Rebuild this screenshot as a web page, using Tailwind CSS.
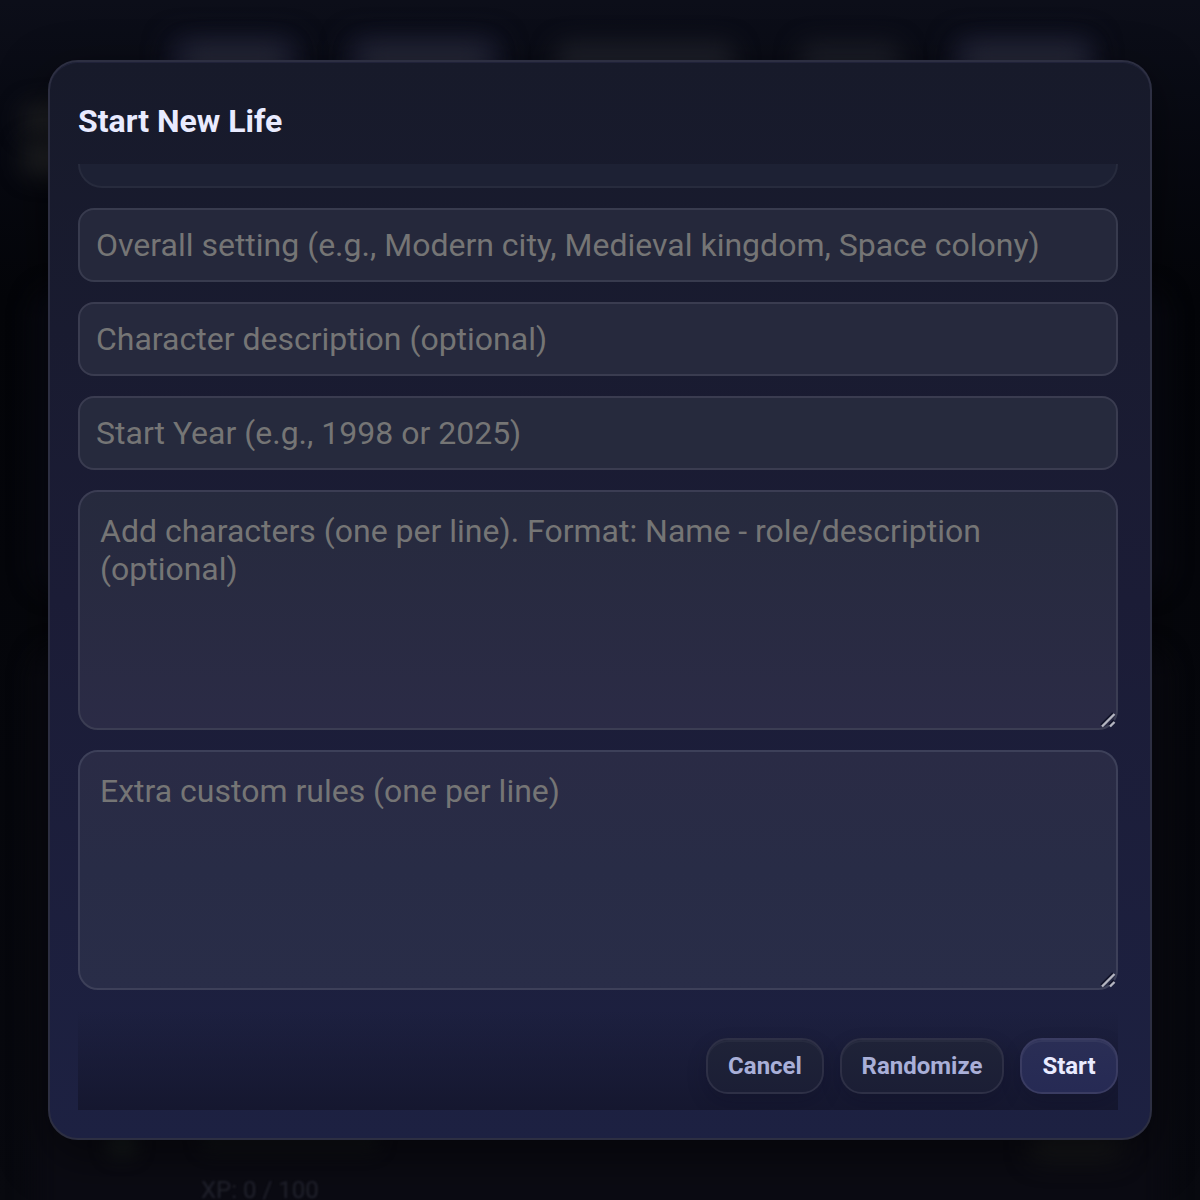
<!DOCTYPE html>
<html lang="en">
  <head>
    <meta charset="UTF-8" />
    <meta name="viewport" content="width=device-width, initial-scale=1.0" />
    <title>Start New Life</title>
    <script src="https://cdn.jsdelivr.net/npm/@tailwindcss/browser@4"></script>
  </head>
  <body class="relative h-[1200px] w-[1200px] overflow-hidden bg-[#040509] font-['Roboto',sans-serif]">
    <!-- Page behind the dialog -->
    <div class="absolute inset-0 overflow-hidden" aria-hidden="true">
      <div class="absolute inset-0 bg-linear-to-b from-[#0c0e19] via-[#040509] via-25% to-[#08090f]"></div>
      <div class="absolute top-[290px] left-[34px] h-[300px] w-[1132px] rounded-3xl bg-[#090a14] blur-md"></div>
      <div class="absolute top-[650px] left-[34px] h-[600px] w-[1132px] rounded-3xl bg-[#0b0b13] blur-md"></div>
      <div class="absolute top-[36px] left-[168px] h-14 w-[132px] rounded-xl bg-[#15172a] blur-md"></div>
      <div class="absolute top-[46px] left-[184px] h-8 w-[102px] rounded-xl bg-[#262837] blur-md"></div>
      <div class="absolute top-[36px] left-[346px] h-14 w-[156px] rounded-xl bg-[#15172a] blur-md"></div>
      <div class="absolute top-[46px] left-[360px] h-8 w-[128px] rounded-xl bg-[#262837] blur-md"></div>
      <div class="absolute top-[44px] left-[556px] h-8 w-[178px] rounded-xl bg-[#1f212b] blur-md"></div>
      <div class="absolute top-[44px] left-[800px] h-8 w-[100px] rounded-xl bg-[#1c1e28] blur-md"></div>
      <div class="absolute top-[36px] left-[952px] h-14 w-[144px] rounded-xl bg-[#15172a] blur-md"></div>
      <div class="absolute top-[46px] left-[964px] h-8 w-[122px] rounded-xl bg-[#262837] blur-md"></div>
      <div class="absolute top-[106px] left-[24px] h-7 w-20 rounded-xl bg-[#222325] blur-md"></div>
      <div class="absolute top-[142px] left-[24px] h-8 w-20 rounded-xl bg-[#222325] blur-md"></div>
      <div class="absolute top-[1130px] left-[106px] h-7 w-8 rounded-xl bg-[#14181a] blur-sm"></div>
      <div class="absolute top-[1128px] left-[200px] h-6 w-[180px] rounded-xl bg-[#101216] blur-sm"></div>
      <div class="absolute top-[1132px] left-[1030px] h-7 w-[92px] rounded-xl bg-[#18191b] blur-md"></div>
      <p class="absolute top-[1178px] left-[201px] text-2xl/6 whitespace-nowrap text-[#22232e] blur-[1px]">XP: 0 / 100</p>
    </div>

    <!-- Dialog -->
    <div class="relative mx-12 mt-[60px] flex h-[1080px] flex-col rounded-[30px] border-2 border-[#2d2f42] bg-linear-to-b from-[#171a2a] via-[#1b1c36] via-50% to-[#1d2142] bg-origin-border pt-[28px] pr-[32px] pb-[28px] pl-[28px] shadow-[0_16px_48px_rgba(0,0,0,0.5),inset_0_1px_0_rgba(100,100,170,0.12)]">
      <h2 class="mt-[11px] text-[32px]/[40px] font-bold text-[#e9ebff]">Start New Life</h2>

      <div class="mt-[23px] h-[24px] shrink-0 overflow-hidden">
        <div class="-mt-10 h-16 rounded-[24px] border-2 border-[#272b3d] bg-[#1d2134]"></div>
      </div>

      <form class="mt-5 flex flex-col gap-5">
        <input type="text" class="h-[74px] w-full rounded-[16px] border-2 border-[#383b4e] bg-[#25283b] px-4 text-[32px] text-[#e9ebff] outline-none placeholder:text-[#757575]" placeholder="Overall setting (e.g., Modern city, Medieval kingdom, Space colony)" />
        <input type="text" class="h-[74px] w-full rounded-[16px] border-2 border-[#3a3c50] bg-[#26293d] px-4 text-[32px] text-[#e9ebff] outline-none placeholder:text-[#757575]" placeholder="Character description (optional)" />
        <input type="text" class="h-[74px] w-full rounded-[16px] border-2 border-[#3a3c50] bg-[#262a3d] px-4 text-[32px] text-[#e9ebff] outline-none placeholder:text-[#757575]" placeholder="Start Year (e.g., 1998 or 2025)" />
        <div class="relative h-60">
          <textarea class="block h-full w-full resize-none rounded-[20px] border-2 border-[#3b3d53] bg-linear-to-b from-[#262a3d] to-[#2b2b46] bg-origin-border px-5 py-5 text-[32px]/[38px] text-[#e9ebff] outline-none placeholder:text-[#757575]" placeholder="Add characters (one per line). Format: Name - role/description (optional)"></textarea>
          <svg class="absolute right-[2px] bottom-[2px] size-4" viewBox="0 0 16 16" fill="none">
            <path d="M1 13 13 1M9 13l5-5" stroke="#12142a" stroke-width="2.4" />
            <path d="M2 14.5 14.5 2M10 14.5l4.5-4.5" stroke="#b4b5c0" stroke-width="2.4" />
          </svg>
        </div>
        <div class="relative h-60">
          <textarea class="block h-full w-full resize-none rounded-[20px] border-2 border-[#3d4059] bg-linear-to-b from-[#2a2b45] via-[#282c46] to-[#292d48] bg-origin-border px-5 py-5 text-[32px]/[38px] text-[#e9ebff] outline-none placeholder:text-[#757575]" placeholder="Extra custom rules (one per line)"></textarea>
          <svg class="absolute right-[2px] bottom-[2px] size-4" viewBox="0 0 16 16" fill="none">
            <path d="M1 13 13 1M9 13l5-5" stroke="#12142a" stroke-width="2.4" />
            <path d="M2 14.5 14.5 2M10 14.5l4.5-4.5" stroke="#b4b5c0" stroke-width="2.4" />
          </svg>
        </div>
      </form>

      <!-- Actions -->
      <div class="mt-5 flex h-[100px] shrink-0 items-end justify-end gap-4 overflow-hidden bg-linear-to-b from-[#15172f]/0 to-[#15172f] pb-4">
        <button class="h-14 w-[118px] rounded-[22px] border-2 border-[#2e3046] bg-linear-to-b from-[#1f2338] to-[#1b1e35] text-2xl font-bold text-[#a9afd8] shadow-[0_8px_20px_rgba(10,12,30,0.2),inset_0_2px_0_rgba(255,255,255,0.04)]">Cancel</button>
        <button class="h-14 w-[164px] rounded-[22px] border-2 border-[#2e3046] bg-linear-to-b from-[#1f2338] to-[#1b1e35] text-2xl font-bold text-[#a9afd8] shadow-[0_8px_20px_rgba(10,12,30,0.2),inset_0_2px_0_rgba(255,255,255,0.04)]">Randomize</button>
        <button class="h-14 w-[98px] rounded-[22px] border-2 border-[#3a3c62] bg-linear-to-b from-[#2a2e55] to-[#262a54] text-2xl font-bold text-[#e9ebff] shadow-[0_8px_20px_rgba(10,12,30,0.2),inset_0_2px_0_rgba(255,255,255,0.05)]">Start</button>
      </div>
    </div>
  </body>
</html>
